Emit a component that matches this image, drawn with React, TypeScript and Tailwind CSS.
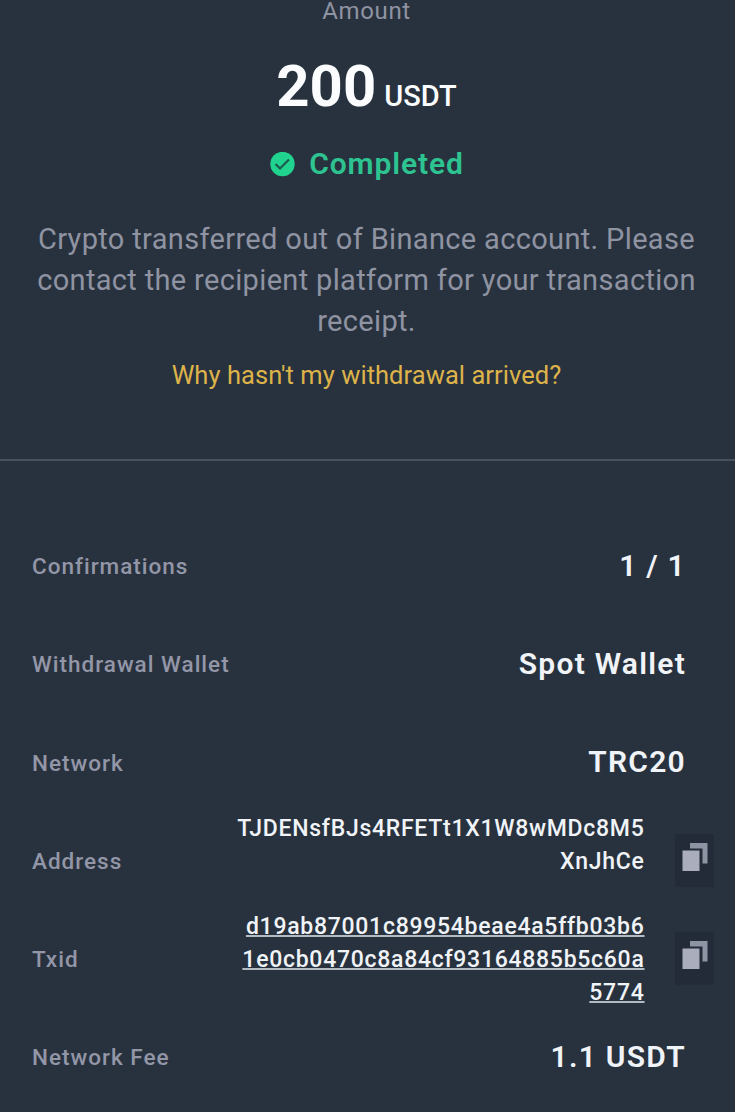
import type { ReactNode } from "react";

function CheckBadge() {
  return (
    <svg className="h-[25px] w-[25px]" viewBox="0 0 25 25" fill="none">
      <circle cx="12.5" cy="12" r="12.2" fill="#20d48f" />
      <path d="M5.500 12l4.500 4.500 9-9" stroke="#1d5a50" strokeWidth="2.200" />
    </svg>
  );
}

function CopyButton() {
  return (
    <button className="flex h-[53px] w-[39px] justify-center bg-[#232b38] pt-2" aria-label="Copy">
      <svg className="h-[30px] w-[26px]" viewBox="0 0 26 30">
        <path d="M8 1h17.500v20.500h-5V6.500H8z" fill="#8f94a4" />
        <path d="M0.500 8.500h17V29H0.500z" fill="#a9adbc" />
      </svg>
    </button>
  );
}

function Row({ label, children }: { label: string; children: ReactNode }) {
  return (
    <div className="flex h-[98.200px] items-center justify-between">
      <dt className="pt-[2px] pl-8 text-[22.500px] font-medium tracking-[1px] text-[#9396a7]">{label}</dt>
      <dd className="flex items-center">{children}</dd>
    </div>
  );
}

function Value({ children }: { children: ReactNode }) {
  return (
    <span className="pr-[49px] pb-[2px] text-[30px] font-semibold tracking-[1.250px] text-[#f0f3f7]">{children}</span>
  );
}

function LongValue({ lines, linked }: { lines: string[]; linked?: boolean }) {
  return (
    <>
      <div className="mr-[30.500px] flex h-[99px] flex-col items-end pt-px text-[23px] leading-[33px] font-medium tracking-[0.720px] text-[#f0f3f7]">
        {lines.map((line) => (
          <span
            key={line}
            className={linked ? "underline decoration-[#b4bac2] decoration-2 underline-offset-[1px]" : ""}
          >
            {line}
          </span>
        ))}
      </div>
      <div className="mr-[21px]">
        <CopyButton />
      </div>
    </>
  );
}

export default function App() {
  return (
    <main className="h-[1112px] w-[735px] overflow-hidden bg-[#28323e] font-['Roboto',sans-serif]">
      <section className="flex h-[459px] flex-col items-center pr-[2px] text-center">
        <p className="text-[24px] leading-[22px] tracking-[0.630px] text-[#8f93a2]">Amount</p>
        <p className="mt-[29px] flex items-baseline text-[#fafcfe]">
          <span className="text-[58px] leading-[70px] font-bold">200</span>
          <span className="ml-[8px] text-[29px] font-medium">USDT</span>
        </p>
        <div className="mt-[25px] flex h-[36px] items-center gap-[14px] pl-px">
          <CheckBadge />
          <span className="text-[30px] leading-[36px] font-semibold tracking-[0.900px] text-[#2dc491]">
            Completed
          </span>
        </div>
        <p className="mt-[37px] text-[29px] leading-[41px] tracking-[0.340px] text-[#8f93a2]">
          Crypto transferred out of Binance account. Please
          <br />
          contact the recipient platform for your transaction
          <br />
          receipt.
        </p>
        <a className="mt-[17px] text-[25.500px] leading-[32px] tracking-[0.050px] text-[#ddb34a]">
          Why hasn't my withdrawal arrived?
        </a>
      </section>
      <hr className="h-[2px] border-0 bg-[#48515d]" />
      <dl className="pt-[56px]">
        <Row label="Confirmations">
          <Value>1 / 1</Value>
        </Row>
        <Row label="Withdrawal Wallet">
          <Value>Spot Wallet</Value>
        </Row>
        <Row label="Network">
          <Value>TRC20</Value>
        </Row>
        <Row label="Address">
          <LongValue lines={["TJDENsfBJs4RFETt1X1W8wMDc8M5", "XnJhCe"]} />
        </Row>
        <Row label="Txid">
          <LongValue
            linked
            lines={["d19ab87001c89954beae4a5ffb03b6", "1e0cb0470c8a84cf93164885b5c60a", "5774"]}
          />
        </Row>
        <Row label="Network Fee">
          <Value>1.1 USDT</Value>
        </Row>
      </dl>
    </main>
  );
}
